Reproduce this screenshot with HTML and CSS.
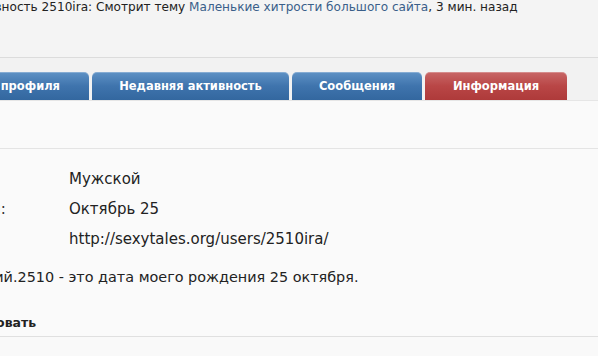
FILE: index.html
```html
<!DOCTYPE html>
<html lang="ru">
<head>
<meta charset="utf-8">
<link rel="stylesheet" href="styles.css">
</head>
<body>
<div class="page">
  <header class="status">
    <p class="status-text">Активность 2510ira: Смотрит тему <a href="#" class="link">Маленькие хитрости большого сайта</a>, 3 мин. назад</p>
  </header>
  <nav class="tabs">
    <a href="#" class="tab tab-first">Сообщения профиля</a>
    <a href="#" class="tab tab-wide">Недавняя активность</a>
    <a href="#" class="tab tab-mid">Сообщения</a>
    <a href="#" class="tab tab-active">Информация</a>
  </nav>
  <main class="content">
    <div class="spacer"></div>
    <dl class="info">
      <div class="row"><dt>Пол:</dt><dd>Мужской</dd></div>
      <div class="row"><dt>День рождения:</dt><dd>Октябрь 25</dd></div>
      <div class="row"><dt>Сайт:</dt><dd>http://sexytales.org/users/2510ira/</dd></div>
    </dl>
    <p class="about">Меня зовут Валерий.2510 - это дата моего рождения 25 октября.</p>
    <h3 class="follow">Подписаться / Игнорировать</h3>
  </main>
</div>
</body>
</html>
```
FILE: styles.css
```css
html, body {
  margin: 0;
  padding: 0;
  overflow: hidden;
  background: #f9f9f9;
}
body {
  width: 598px;
  height: 356px;
  font-family: "DejaVu Sans", sans-serif;
  font-size: 15px;
  color: #222;
}
.page {
  display: flex;
  flex-direction: column;
}
.status {
  height: 57px;
  background: #f4f4f4;
  border-bottom: 1px solid #dcdcdc;
  box-shadow: 0 1px 0 #fff;
}
.status-text {
  margin: 0;
  line-height: 15px;
  white-space: nowrap;
  margin-left: -36px;
  font-size: 12.1px;
  color: #222;
}
.link {
  color: #3a5f8a;
  text-decoration: none;
}
.tabs {
  display: flex;
  gap: 3px;
  padding-top: 14px;
  background: #f2f2f2;
  height: 28px;
  border-bottom: 1px solid #e6e6e6;
}
.tab {
  display: flex;
  align-items: center;
  justify-content: center;
  height: 28px;
  border-radius: 5px 5px 0 0;
  color: #fff;
  font-weight: bold;
  font-size: 11.5px;
  text-decoration: none;
  white-space: nowrap;
  background: linear-gradient(#5f92c5, #3f74ad 50%, #33679f);
  box-shadow: inset 0 1px 0 rgba(255,255,255,0.25);
}
.tab-first {
  width: 180px;
  margin-left: -91px;
  justify-content: flex-end;
  padding-right: 29px;
  box-sizing: border-box;
}
.tab-wide { width: 197px; }
.tab-mid { width: 130px; }
.tab-active {
  width: 142px;
  background: linear-gradient(#c86767, #b94646 50%, #ae3a3a);
}
.content {
  background: #fafafa;
  display: flex;
  flex-direction: column;
}
.spacer {
  height: 47px;
  border-bottom: 1px solid #e4e4e4;
}
.info {
  margin: 0;
  padding-top: 21px;
  display: flex;
  flex-direction: column;
}
.row {
  display: flex;
  height: 30px;
  align-items: flex-start;
  line-height: 18px;
}
.row dt {
  width: 193px;
  flex: none;
  margin-left: -124px;
  white-space: nowrap;
  color: #333;
}
.row dd {
  margin: 0;
  white-space: nowrap;
  color: #222;
}
.about {
  margin: 8px 0 0 -142px;
  font-size: 14.4px;
  line-height: 18px;
  white-space: nowrap;
  color: #222;
}
.follow {
  margin: 0 0 0 -171px;
  padding-top: 28px;
  padding-bottom: 4px;
  line-height: 18px;
  font-size: 12.5px;
  font-weight: bold;
  border-bottom: 1px solid #e0e0e0;
  white-space: nowrap;
}
```
